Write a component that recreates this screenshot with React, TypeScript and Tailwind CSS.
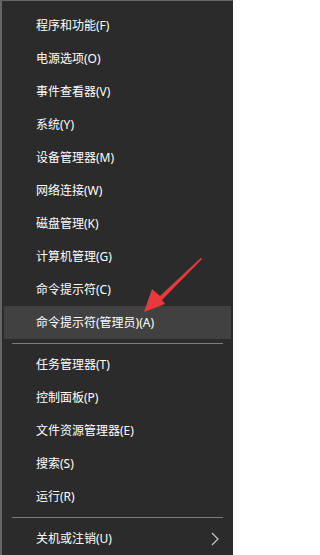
import React from 'react';

const groups: string[][] = [
  [
    '程序和功能(F)',
    '电源选项(O)',
    '事件查看器(V)',
    '系统(Y)',
    '设备管理器(M)',
    '网络连接(W)',
    '磁盘管理(K)',
    '计算机管理(G)',
    '命令提示符(C)',
    '命令提示符(管理员)(A)',
  ],
  ['任务管理器(T)', '控制面板(P)', '文件资源管理器(E)', '搜索(S)', '运行(R)'],
  ['关机或注销(U)'],
];

const Row: React.FC<{ label: string; active?: boolean; sub?: boolean }> = ({ label, active, sub }) => (
  <div
    className={`h-[33px] flex items-center justify-between pl-8 pr-2 text-[12px] text-white ${
      active ? 'bg-[#414141]' : ''
    }`}
  >
    <span>{label}</span>
    {sub && (
      <svg width="8" height="14" viewBox="0 0 8 14" className="mr-1">
        <polyline points="1,1 7,7 1,13" fill="none" stroke="#d0d0d0" strokeWidth="1.1" />
      </svg>
    )}
  </div>
);

const App: React.FC = () => {
  return (
    <div
      className="relative w-[233px] h-[555px] overflow-hidden bg-[#2b2b2b] border-t border-l-2 border-[#666666] pt-2 px-[2px]"
      style={{ fontFamily: '"Noto Sans", "Noto Sans CJK SC", sans-serif' }}
    >
      {groups.map((items, g) => (
        <div key={g}>
          {g > 0 && (
            <div className="h-[9px] flex items-center px-2">
              <div className="h-px w-full bg-[#7c7c7c]" />
            </div>
          )}
          {items.map((label) => (
            <Row
              key={label}
              label={label}
              active={label === '命令提示符(管理员)(A)'}
              sub={label === '关机或注销(U)'}
            />
          ))}
        </div>
      ))}

      {/* red annotation arrow */}
      <svg
        className="absolute left-[128px] top-[250px]"
        width="80"
        height="70"
        viewBox="0 0 80 70"
      >
        <polygon
          points="72,8 71,6.8 30,45 22,38 14,61 35,53 32,49"
          fill="#e83a3c"
        />
      </svg>
    </div>
  );
};

export default App;
